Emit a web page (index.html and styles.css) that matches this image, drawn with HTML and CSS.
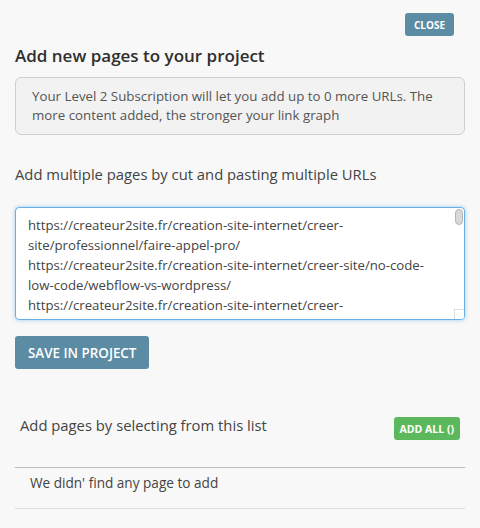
FILE: index.html
```html
<!DOCTYPE html>
<html>
<head>
<meta charset="utf-8">
<link rel="stylesheet" href="styles.css">
</head>
<body>
<div class="panel">
  <div class="top-row"><button class="btn-close">CLOSE</button></div>
  <h2 class="title">Add new pages to your project</h2>
  <div class="info">Your Level 2 Subscription will let you add up to 0 more URLs. The more content added, the stronger your link graph</div>
  <p class="label">Add multiple pages by cut and pasting multiple URLs</p>
  <div class="textarea">
    <div class="lines">
      <span>https://createur2site.fr/creation-site-internet/creer-</span>
      <span>site/professionnel/faire-appel-pro/</span>
      <span>https://createur2site.fr/creation-site-internet/creer-site/no-code-</span>
      <span>low-code/webflow-vs-wordpress/</span>
      <span>https://createur2site.fr/creation-site-internet/creer-</span>
      <span>site/professionnel/combien-coute-site/</span>
    </div>
    <div class="thumb"></div>
    <div class="grip"></div>
  </div>
  <button class="btn-save">SAVE IN PROJECT</button>
  <div class="list-head">
    <span class="list-label">Add pages by selecting from this list</span>
    <button class="btn-add">ADD ALL ()</button>
  </div>
  <div class="empty">We didn' find any page to add</div>
</div>
</body>
</html>
```
FILE: styles.css
```css
html, body {
  margin: 0;
  padding: 0;
  background: #f8f8f8;
}
body {
  font-family: "Open Sans", "Noto Sans", sans-serif;
  color: #333;
  width: 480px;
  height: 528px;
  overflow: hidden;
}
.panel {
  padding: 13px 15px 0 15px;
}
.top-row {
  display: flex;
  justify-content: flex-end;
  padding-right: 11px;
}
button {
  font-family: inherit;
  border: none;
  color: #fff;
  cursor: pointer;
}
.btn-close {
  background: #5b8ca4;
  font-size: 10px;
  font-weight: 700;
  width: 49px;
  height: 23px;
  border-radius: 3px;
  padding: 0;
}
.title {
  margin: 7px 0 0 0;
  font-size: 17px;
  font-weight: 600;
  color: #2f2f2f;
  line-height: 26px;
}
.info {
  margin-top: 8px;
  border: 1px solid #cfcfcf;
  border-radius: 6px;
  background: #f2f2f2;
  color: #555;
  font-size: 13.3px;
  line-height: 19px;
  padding: 9px 16px 9px 16px;
}
.label {
  margin: 29px 0 0 0;
  font-size: 14.8px;
  color: #444;
  line-height: 20px;
}
.textarea {
  position: relative;
  margin-top: 23px;
  height: 113px;
  box-sizing: border-box;
  background: #fff;
  border: 1px solid #66afe9;
  border-radius: 4px;
  box-shadow: 0 0 4px rgba(102, 175, 233, 0.6);
  overflow: hidden;
}
.lines {
  padding: 7px 12px;
  font-size: 13.2px;
  line-height: 20px;
  color: #444;
}
.lines span {
  display: block;
  white-space: nowrap;
}
.thumb {
  position: absolute;
  top: 1px;
  right: 1px;
  width: 8px;
  height: 16px;
  border-radius: 4px;
  background: #d9d9d9;
  border: 1px solid #b5b5b5;
  box-sizing: border-box;
}
.grip {
  position: absolute;
  right: 0;
  bottom: 0;
  width: 9px;
  height: 9px;
  background: #fff;
  border-left: 1px solid #ddd;
  border-top: 1px solid #ddd;
}
.btn-save {
  display: block;
  margin-top: 16px;
  background: #5b8ca4;
  font-size: 13.4px;
  font-weight: 600;
  height: 33px;
  padding: 0 13px;
  border-radius: 3px;
}
.list-head {
  display: flex;
  justify-content: space-between;
  align-items: flex-start;
  margin-top: 46px;
  padding: 0 5px;
  height: 52px;
  border-bottom: 1px solid #bbb;
}
.list-label {
  font-size: 14.8px;
  color: #444;
  line-height: 20px;
}
.btn-add {
  background: #5cb85c;
  font-size: 10.5px;
  font-weight: 700;
  height: 23px;
  padding: 0 6px;
  border-radius: 3px;
  margin-top: 2px;
}
.empty {
  padding: 5px 15px;
  font-size: 13.6px;
  line-height: 20px;
  color: #444;
  height: 30px;
  border-bottom: 1px solid #ddd;
}
```
